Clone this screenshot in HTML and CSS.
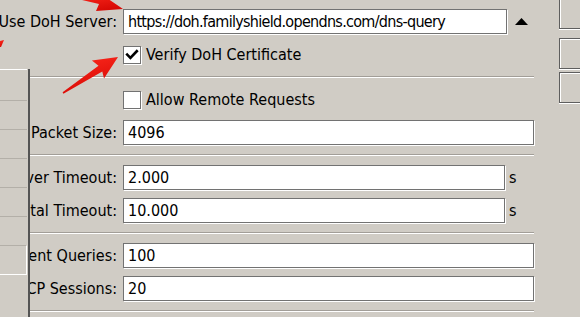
FILE: index.html
```html
<!DOCTYPE html>
<html lang="en">
<head>
    <meta charset="UTF-8">
    <title>DNS Settings</title>
    <link rel="stylesheet" href="styles.css">
</head>
<body>
    <div class="screen">
        <aside class="side">
            <div class="side-panel">
                <div class="side-item first"></div>
                <div class="side-item"></div>
                <div class="side-item"></div>
                <div class="side-item"></div>
                <div class="side-item"></div>
                <div class="side-item"></div>
                <div class="side-item selected"></div>
            </div>
        </aside>

        <main class="form">
            <section class="group">
                <div class="row">
                    <span class="lbl">Use DoH Server:</span>
                    <div class="field">
                        <div class="box doh">https://doh.familyshield.opendns.com/dns-query</div>
                        <svg class="tri" width="13" height="7" viewBox="0 0 13 7"><polygon points="6.5,0 13,7 0,7" fill="#000"/></svg>
                    </div>
                </div>
                <div class="row">
                    <span class="lbl"></span>
                    <label class="check">
                        <span class="cb"><svg width="16" height="16" viewBox="0 0 16 16"><path d="M3.2 7.6 L6.4 10.8 L12.8 4.2" fill="none" stroke="#000" stroke-width="2.6" stroke-linecap="square"/></svg></span>
                        Verify DoH Certificate
                    </label>
                </div>
            </section>
            <div class="sep"></div>

            <section class="group">
                <div class="row">
                    <span class="lbl"></span>
                    <label class="check"><span class="cb"></span>Allow Remote Requests</label>
                </div>
                <div class="row">
                    <span class="lbl">Max UDP Packet Size:</span>
                    <div class="field"><div class="box">4096</div></div>
                </div>
            </section>
            <div class="sep"></div>

            <section class="group">
                <div class="row">
                    <span class="lbl">Query Server Timeout:</span>
                    <div class="field"><div class="box unit">2.000</div><span class="suffix">s</span></div>
                </div>
                <div class="row">
                    <span class="lbl">Query Total Timeout:</span>
                    <div class="field"><div class="box unit">10.000</div><span class="suffix">s</span></div>
                </div>
            </section>
            <div class="sep"></div>

            <section class="group">
                <div class="row">
                    <span class="lbl">Max Concurrent Queries:</span>
                    <div class="field"><div class="box">100</div></div>
                </div>
                <div class="row">
                    <span class="lbl">Max Concurrent TCP Sessions:</span>
                    <div class="field"><div class="box">20</div></div>
                </div>
            </section>
            <div class="sep"></div>
        </main>

        <div class="buttons">
            <div class="btn first"></div>
            <div class="btn"></div>
            <div class="btn third"></div>
        </div>

        <!-- red annotation arrows drawn over the dialog -->
        <svg class="arrows" width="580" height="317" viewBox="0 0 580 317">
            <defs>
                <linearGradient id="red" x1="0" y1="0" x2="0.4" y2="1">
                    <stop offset="0" stop-color="#ff2a1e"/>
                    <stop offset="1" stop-color="#d80b06"/>
                </linearGradient>
            </defs>
            <polygon fill="url(#red)" points="80,-6 100,-2 98,-8 123,9 96,11 99,4 82,0"/>
            <polygon fill="url(#red)" points="62.6,92.3 98.5,65.7 91.9,60.5 118,57 104,78.5 102.3,71.5 63.4,93.7"/>
            <polygon fill="url(#red)" points="0,41 4,40 1,47 0,47"/>
        </svg>
    </div>
</body>
</html>
```

FILE: styles.css
```css
body {
    margin: 0;
    background: #d0ccc5;
    font-family: 'DejaVu Sans Condensed', 'DejaVu Sans', Verdana, sans-serif;
    font-size: 16px;
    color: #000;
    overflow: hidden;
}
.screen {
    position: relative;
    width: 580px;
    height: 317px;
    display: flex;
    overflow: hidden;
}
.side {
    width: 30px;
    flex: 0 0 30px;
    padding-top: 69px;
}
.side-panel {
    position: relative;
    z-index: 1;
    height: 100%;
    background: #d0ccc5;
    border-right: 2px solid #545454;
}
.side-item {
    width: 27px;
    height: 28px;
    border-top: 1px solid #b3afa8;
}
.side-item.first {
    height: 30px;
    border-top: 1px solid #fff;
}
.side-item.selected {
    width: 26px;
    border-right: 1px solid #fff;
    border-bottom: 1px solid #fff;
}
.form {
    width: 504px;
    flex: 0 0 504px;
}
.group {
    padding: 9px 0;
    display: flex;
    flex-direction: column;
    gap: 8px;
}
.sep {
    border-top: 1px solid #a29e98;
    border-bottom: 1px solid #fff;
}
.row {
    display: grid;
    grid-template-columns: 87px 1fr;
    column-gap: 6px;
    height: 25px;
    align-items: center;
}
.lbl {
    display: flex;
    justify-content: flex-end;
    white-space: nowrap;
}
.field {
    display: flex;
    align-items: center;
}
.box {
    box-sizing: border-box;
    width: 411px;
    height: 25px;
    line-height: 23px;
    padding-left: 4px;
    background: #fff;
    border: 1px solid #727272;
    box-shadow: 1px 1px 0 #fff;
    white-space: nowrap;
    overflow: hidden;
}
.box.doh {
    width: 384px;
    letter-spacing: -0.7px;
}
.box.unit {
    width: 382px;
}
.suffix {
    margin-left: 4px;
}
.tri {
    margin-left: 8px;
    margin-top: -1px;
}
.check {
    display: flex;
    align-items: center;
    gap: 5px;
    white-space: nowrap;
}
.cb {
    box-sizing: border-box;
    width: 18px;
    height: 18px;
    background: #fff;
    border: 1px solid #727272;
    box-shadow: 1px 1px 0 #fff;
    display: flex;
    align-items: center;
    justify-content: center;
}
.buttons {
    margin-left: 25px;
    display: flex;
    flex-direction: column;
}
.btn {
    box-sizing: border-box;
    width: 40px;
    height: 31px;
    margin-top: 9px;
    border: 1px solid #5e5e5e;
    box-shadow: inset 1px 1px 0 #fff, 0 1px 0 #fff;
}
.btn.first {
    margin-top: -2px;
}
.btn.third {
    margin-top: 3px;
}
.arrows {
    position: absolute;
    top: 0;
    left: 0;
    z-index: 2;
    pointer-events: none;
}
```
